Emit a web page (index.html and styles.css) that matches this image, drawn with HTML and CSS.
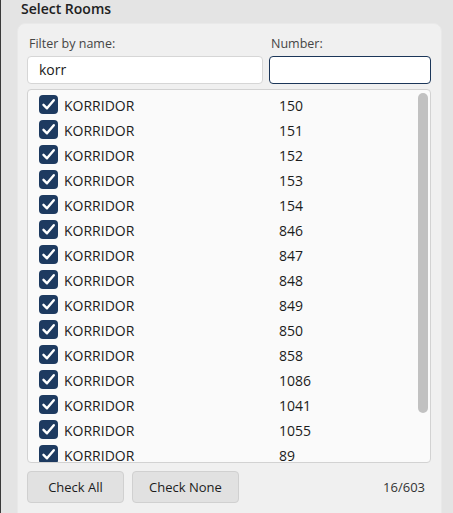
FILE: index.html
```html
<!DOCTYPE html>
<html lang="en">
<head>
<meta charset="utf-8">
<title>Select Rooms</title>
<link rel="stylesheet" href="styles.css">
</head>
<body>
<div class="window">
  <div class="title">Select Rooms</div>
  <div class="card">
    <div class="filters">
      <div class="field">
        <label class="label">Filter by name:</label>
        <div class="input">korr</div>
      </div>
      <div class="field">
        <label class="label">Number:</label>
        <div class="input focused"></div>
      </div>
    </div>
    <div class="list">
      <div class="row"><span class="cb"><svg viewBox="0 0 19 19"><polyline points="4.5,9.8 8,13.3 14.8,5.2"/></svg></span><span class="name">KORRIDOR</span><span class="num">150</span></div>
      <div class="row"><span class="cb"><svg viewBox="0 0 19 19"><polyline points="4.5,9.8 8,13.3 14.8,5.2"/></svg></span><span class="name">KORRIDOR</span><span class="num">151</span></div>
      <div class="row"><span class="cb"><svg viewBox="0 0 19 19"><polyline points="4.5,9.8 8,13.3 14.8,5.2"/></svg></span><span class="name">KORRIDOR</span><span class="num">152</span></div>
      <div class="row"><span class="cb"><svg viewBox="0 0 19 19"><polyline points="4.5,9.8 8,13.3 14.8,5.2"/></svg></span><span class="name">KORRIDOR</span><span class="num">153</span></div>
      <div class="row"><span class="cb"><svg viewBox="0 0 19 19"><polyline points="4.5,9.8 8,13.3 14.8,5.2"/></svg></span><span class="name">KORRIDOR</span><span class="num">154</span></div>
      <div class="row"><span class="cb"><svg viewBox="0 0 19 19"><polyline points="4.5,9.8 8,13.3 14.8,5.2"/></svg></span><span class="name">KORRIDOR</span><span class="num">846</span></div>
      <div class="row"><span class="cb"><svg viewBox="0 0 19 19"><polyline points="4.5,9.8 8,13.3 14.8,5.2"/></svg></span><span class="name">KORRIDOR</span><span class="num">847</span></div>
      <div class="row"><span class="cb"><svg viewBox="0 0 19 19"><polyline points="4.5,9.8 8,13.3 14.8,5.2"/></svg></span><span class="name">KORRIDOR</span><span class="num">848</span></div>
      <div class="row"><span class="cb"><svg viewBox="0 0 19 19"><polyline points="4.5,9.8 8,13.3 14.8,5.2"/></svg></span><span class="name">KORRIDOR</span><span class="num">849</span></div>
      <div class="row"><span class="cb"><svg viewBox="0 0 19 19"><polyline points="4.5,9.8 8,13.3 14.8,5.2"/></svg></span><span class="name">KORRIDOR</span><span class="num">850</span></div>
      <div class="row"><span class="cb"><svg viewBox="0 0 19 19"><polyline points="4.5,9.8 8,13.3 14.8,5.2"/></svg></span><span class="name">KORRIDOR</span><span class="num">858</span></div>
      <div class="row"><span class="cb"><svg viewBox="0 0 19 19"><polyline points="4.5,9.8 8,13.3 14.8,5.2"/></svg></span><span class="name">KORRIDOR</span><span class="num">1086</span></div>
      <div class="row"><span class="cb"><svg viewBox="0 0 19 19"><polyline points="4.5,9.8 8,13.3 14.8,5.2"/></svg></span><span class="name">KORRIDOR</span><span class="num">1041</span></div>
      <div class="row"><span class="cb"><svg viewBox="0 0 19 19"><polyline points="4.5,9.8 8,13.3 14.8,5.2"/></svg></span><span class="name">KORRIDOR</span><span class="num">1055</span></div>
      <div class="row"><span class="cb"><svg viewBox="0 0 19 19"><polyline points="4.5,9.8 8,13.3 14.8,5.2"/></svg></span><span class="name">KORRIDOR</span><span class="num">89</span></div>
      <div class="scrollbar"></div>
    </div>
    <div class="actions">
      <button class="btn btn-all">Check All</button>
      <button class="btn btn-none">Check None</button>
      <span class="count">16/603</span>
    </div>
  </div>
</div>
</body>
</html>
```

FILE: styles.css
```css
html, body {
  margin: 0;
  padding: 0;
  height: 100%;
  overflow: hidden;
}
body {
  background: #e4e4e4;
  font-family: "Segoe UI", "Open Sans", "Noto Sans", sans-serif;
  color: #1c1c1c;
}
.window {
  height: 100%;
  border-left: 1px solid #3a3a3a;
  box-sizing: border-box;
}
.title {
  padding-left: 20px;
  font-size: 14px;
  font-weight: 600;
  line-height: 18px;
  height: 23px;
  color: #202020;
}
.card {
  margin-left: 16px;
  width: 425px;
  box-sizing: border-box;
  background: #f0f0f0;
  border: 1px solid #e9e9e9;
  border-radius: 8px;
  padding: 12px 10px 24px 9px;
}
.filters {
  display: grid;
  grid-template-columns: 236px 1fr;
  column-gap: 6px;
}
.field {
  display: flex;
  flex-direction: column;
}
.label {
  font-size: 12.5px;
  line-height: 16px;
  color: #454545;
  padding-left: 2px;
  margin-bottom: 4px;
}
.input {
  height: 28px;
  box-sizing: border-box;
  background: #ffffff;
  border: 1px solid #d6d6d6;
  border-radius: 4px;
  padding-left: 11px;
  font-size: 14px;
  line-height: 26px;
  color: #1a1a1a;
}
.input.focused {
  border-color: #1b3659;
}
.list {
  position: relative;
  margin-top: 5px;
  height: 374px;
  box-sizing: border-box;
  background: #fafafa;
  border: 1px solid #d2d2d2;
  border-radius: 4px;
  padding: 2px 0 0 11px;
  overflow: hidden;
}
.row {
  display: flex;
  align-items: center;
  height: 25px;
  font-size: 14px;
  line-height: 25px;
}
.cb {
  width: 19px;
  height: 19px;
  flex: 0 0 19px;
  background: #1d3a60;
  border-radius: 4px;
  display: flex;
}
.cb svg {
  width: 19px;
  height: 19px;
}
.cb polyline {
  fill: none;
  stroke: #ffffff;
  stroke-width: 2.4;
  stroke-linecap: round;
  stroke-linejoin: round;
}
.name {
  margin-left: 6px;
  width: 215px;
  padding-top: 1px;
}
.num {
  color: #1c1c1c;
  padding-top: 1px;
}
.scrollbar {
  position: absolute;
  top: 3px;
  right: 2px;
  width: 10px;
  height: 320px;
  background: #c1c1c1;
  border-radius: 5px;
}
.actions {
  display: flex;
  align-items: center;
  margin-top: 8px;
  gap: 8px;
}
.btn {
  height: 32px;
  box-sizing: border-box;
  background: #e1e1e1;
  border: 1px solid #d0d0d0;
  border-radius: 4px;
  font-family: inherit;
  font-size: 13px;
  color: #1c1c1c;
  padding: 0;
}
.btn-all { width: 97px; }
.btn-none { width: 107px; }
.count {
  margin-left: auto;
  margin-right: 6px;
  font-size: 13px;
  color: #333333;
}
```
